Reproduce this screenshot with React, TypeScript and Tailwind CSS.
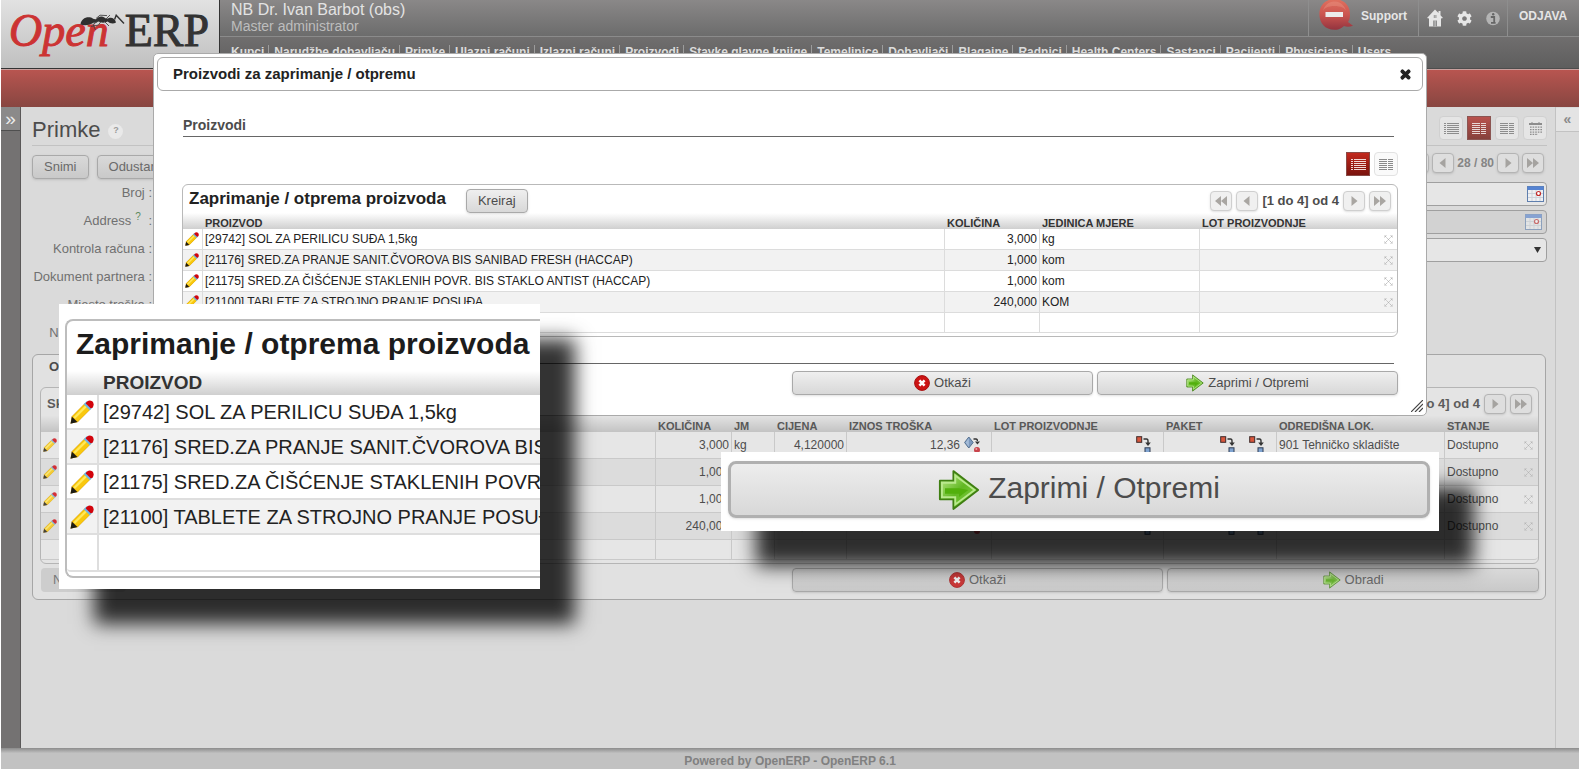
import { FaCog, FaTimes } from "react-icons/fa";
import clsx from "clsx";
import type { ReactNode } from "react";

const navItems = [
  "Kupci",
  "Narudžbe dobavljaču",
  "Primke",
  "Ulazni računi",
  "Izlazni računi",
  "Proizvodi",
  "Stavke glavne knjige",
  "Temeljnice",
  "Dobavljači",
  "Blagajne",
  "Radnici",
  "Health Centers",
  "Sastanci",
  "Pacijenti",
  "Physicians",
  "Users",
];

const products = [
  { name: "[29742] SOL ZA PERILICU SUĐA 1,5kg", qty: "3,000", unit: "kg", price: "4,120000", cost: "12,36" },
  { name: "[21176] SRED.ZA PRANJE SANIT.ČVOROVA BIS SANIBAD FRESH (HACCAP)", qty: "1,000", unit: "kom", price: "33,750000", cost: "33,75" },
  { name: "[21175] SRED.ZA ČIŠĆENJE STAKLENIH POVR. BIS STAKLO ANTIST (HACCAP)", qty: "1,000", unit: "kom", price: "28,500000", cost: "28,50" },
  { name: "[21100] TABLETE ZA STROJNO PRANJE POSUĐA", qty: "240,000", unit: "KOM", price: "0,750000", cost: "180,00" },
];

/* ---------- icons ---------- */

function Pencil({ className }: { className: string }) {
  return (
    <svg className={className} viewBox="0 0 14 14">
      <path d="M0.3 13.7 L1 9.6 L9 1.6 L12.4 5 L4.4 13 Z" fill="#c98a00" />
      <path d="M1.2 9.6 L8.6 2.2 L11.8 5.4 L4.4 12.8 Z" fill="#f9c80e" />
      <path d="M2 10 L9 3 L10 4 L3 11 Z" fill="#ffe85c" />
      <path d="M0.3 13.8 L1.1 9.8 L4.3 12.9 Z" fill="#1c1c14" />
      <path d="M8 2.5 L9.7 0.8 L13.2 4.3 L11.5 6 Z" fill="#6cb6e8" />
      <path d="M9.4 1.4 Q11 -0.6 13 0.8 Q14.6 2.6 13 4.6 L12 4.8 L9.2 2 Z" fill="#d2040c" />
    </svg>
  );
}

function GreenArrow({ className }: { className: string }) {
  return (
    <svg className={className} viewBox="0 0 18 18">
      <defs>
        <linearGradient id="arrowFill" x1="0" y1="0" x2="1" y2="1">
          <stop offset="0" stopColor="#c8f09a" />
          <stop offset="0.5" stopColor="#62b823" />
          <stop offset="1" stopColor="#84d044" />
        </linearGradient>
      </defs>
      <path d="M0.8 5 H6.6 V0.9 L17.2 9 L6.6 17.1 V13 H0.8 Z" fill="url(#arrowFill)" stroke="#3f7f12" strokeWidth="0.8" strokeLinejoin="round" />
      <path d="M1.7 5.9 H7.4 V2.8 L15.7 9 L7.4 15.2 V12.1 H1.7 Z" fill="none" stroke="#b9e98d" strokeWidth="0.8" />
      <path d="M3 8.2 H9 L13 9 L9 12 V10.6 H3 Z" fill="#52b00c" />
    </svg>
  );
}

function CancelIcon({ dim }: { dim?: boolean }) {
  return (
    <svg className={clsx("size-4", dim && "opacity-80")} viewBox="0 0 16 16">
      <circle cx="8" cy="8" r="7.4" fill="#cc1414" stroke="#a80f0f" />
      <path d="M5.4 5.4 L10.6 10.6 M10.6 5.4 L5.4 10.6" stroke="#fff" strokeWidth="2.6" />
    </svg>
  );
}

function SplitIcon() {
  return (
    <svg className="h-[18px] w-4" viewBox="0 0 16 18">
      <rect x="0.7" y="0.7" width="5" height="5.6" fill="#d9573c" stroke="#3c2a2a" />
      <path d="M7.5 3 H10.5 Q12 3 12 5 V8" fill="none" stroke="#333" strokeWidth="1.4" />
      <path d="M9.2 6.6 H14.8 L12 10 Z" fill="#333" />
      <rect x="9" y="11.8" width="5" height="5.5" fill="#7fa3d0" stroke="#2c3b52" />
    </svg>
  );
}

function ConsumeIcon() {
  return (
    <svg className="h-[18px] w-4" viewBox="0 0 16 18">
      <path d="M4.8 1 L9.2 6.5 L4.8 12 L0.6 6.5 Z" fill="#7b98bd" stroke="#54708f" />
      <path d="M4.8 2 V11 L1.5 6.5 Z" fill="#a5bcd8" />
      <path d="M9.5 3 H12 Q13.4 3 13.4 5" fill="none" stroke="#333" strokeWidth="1.4" />
      <path d="M11 5.4 H16 L13.4 8.6 Z" fill="#333" />
      <circle cx="13" cy="14" r="3" fill="#c9444c" />
      <circle cx="12.3" cy="13" r="1" fill="#eea3a6" />
    </svg>
  );
}

function RowDelete() {
  return (
    <button aria-label="Ukloni" className="flex items-center justify-center text-[#b5b5b5]">
      <svg className="size-[9px]" viewBox="0 0 9 9" stroke="currentColor" fill="none">
        <path d="M1 1 L8 8 M8 1 L1 8" strokeDasharray="1.6 0.6" />
        <path d="M0.5 3 V0.5 H3 M6 0.5 H8.5 V3 M8.5 6 V8.5 H6 M3 8.5 H0.5 V6" strokeWidth="0.4" />
      </svg>
    </button>
  );
}

function ListGlyph() {
  return (
    <svg className="h-[11px] w-[15px]" viewBox="0 0 15 11" stroke="currentColor" shapeRendering="crispEdges">
      <path d="M0 0.5 H2 M0 2.5 H2 M0 4.5 H2 M0 6.5 H2 M0 8.5 H2 M0 10.5 H2" />
      <path d="M3 0.5 H15 M3 2.5 H15 M3 4.5 H15 M3 6.5 H15 M3 8.5 H15 M3 10.5 H15" />
    </svg>
  );
}

function FormGlyph() {
  return (
    <svg className="h-[11px] w-[14px]" viewBox="0 0 14 11" stroke="currentColor" shapeRendering="crispEdges">
      <path d="M0 0.5 H8 M0 2.5 H8 M0 4.5 H8 M0 6.5 H8 M0 8.5 H8 M0 10.5 H8" />
      <path d="M9 0.5 H14 M9 2.5 H14 M9 4.5 H14 M9 6.5 H14 M9 8.5 H14 M9 10.5 H14" />
    </svg>
  );
}

function CalendarGlyph() {
  return (
    <svg className="h-[13px] w-[13px]" viewBox="0 0 13 13" stroke="currentColor" fill="none">
      <path d="M0 2 H13" strokeWidth="2" />
      <path d="M3 0 V2 M10 0 V2" />
      <path d="M1 5.2 H13 M1 7.7 H13 M1 10.2 H13 M1 12.4 H9" strokeWidth="1.3" strokeDasharray="1.6 1" />
    </svg>
  );
}

function DateIcon({ faded }: { faded?: boolean }) {
  return (
    <svg className={clsx("h-4 w-[17px]", faded && "opacity-60")} viewBox="0 0 17 16">
      <rect x="0.5" y="0.5" width="16" height="15" fill="#eef0f3" stroke="#5f7fae" />
      <rect x="0.5" y="0.5" width="16" height="3.5" fill="#5583d2" />
      <path d="M1 7.5 H16 M1 11.5 H16 M5 4 V15 M9 4 V15 M13 4 V15" stroke="#cdd2da" />
      <circle cx="11.5" cy="7.5" r="2" fill="#fff" stroke="#c22b2b" strokeWidth="1.2" />
    </svg>
  );
}

function SupportIcon() {
  return (
    <svg className="h-[30px] w-[34px]" viewBox="0 0 34 30">
      <defs>
        <linearGradient id="bubble" x1="0" y1="0" x2="0" y2="1">
          <stop offset="0" stopColor="#e0715f" />
          <stop offset="0.5" stopColor="#cb5550" />
          <stop offset="1" stopColor="#94343f" />
        </linearGradient>
      </defs>
      <path
        d="M15.5 -1 C24 -1 31 5 31 14 C31 18 30.4 20 29 22 L34 25.8 C31 27 27 27 25 26 C22 29 19 29.8 15.5 29.8 C6 29.8 0.4 23 0.4 14 C0.4 5 7 -1 15.5 -1 Z"
        fill="url(#bubble)"
      />
      <path d="M4 12 C4 4 27 4 27 12 C27 9 24 1.5 15.5 1.5 C7 1.5 4 9 4 12 Z" fill="#eda090" opacity="0.35" />
      <rect x="6.5" y="12" width="17.5" height="5" fill="#ececec" />
    </svg>
  );
}

function HomeIcon() {
  return (
    <svg className="h-[18px] w-4" viewBox="0 0 16 18">
      <path d="M8 0.5 L0 9 L2 9.6 V17.5 H14 V9.6 L16 9 L13.5 6.2 V2 H11.5 V4 Z" fill="#e6e6e6" />
      <path d="M6.2 17.5 V11.5 H10 V17.5 Z M6.8 6 H9.4 V9 H6.8 Z" fill="#8b8b8b" />
      <path d="M8.1 11.5 V17.5 M8.1 6 V9" stroke="#e6e6e6" strokeWidth="0.7" />
    </svg>
  );
}

function InfoIcon() {
  return (
    <svg className="h-[15px] w-[14px]" viewBox="0 0 14 15">
      <circle cx="7" cy="7.5" r="6.8" fill="#b4b4b4" />
      <path d="M4.8 6 H8.2 V11.6 M5 11.8 H9.6" stroke="#666" strokeWidth="1.8" fill="none" />
      <circle cx="7.2" cy="3.2" r="1.2" fill="#666" />
    </svg>
  );
}

function Ant() {
  return (
    <svg className="absolute top-[14px] left-[79px] h-[17px] w-[46px]" viewBox="0 0 46 17">
      <path
        d="M0.5 10.6 C1 5 6 2.4 11 3.6 C13 4.6 14.4 6 16.5 5 C18 2.4 22 1.6 24.4 3.6 C25.5 5 27.5 4.8 29 4 C31.5 3 35.4 4.4 36 8.6 C33.4 10.2 29.5 9.6 27.8 7.6 C25 9 21 9 18.5 7.6 C17 8.6 15 9 13.4 8.8 C10 11.6 4 11.6 0.5 10.6 Z"
        fill="#2f2f2f"
      />
      <path
        d="M18 7 L13 10.5 L15.5 16 M21 7.5 L18.5 11 L11 12.5 M24 7 L29 12 M16 4.5 L20 1.2 L27 1.6 M26 5 L30 1"
        fill="none"
        stroke="#444"
        strokeWidth="0.9"
      />
      <path d="M34.6 5.5 L36.2 1.2 L44 9.5" fill="none" stroke="#333" strokeWidth="1.4" />
    </svg>
  );
}

/* ---------- small building blocks ---------- */

function PagerButton({ dir, dim }: { dir: "first" | "prev" | "next" | "last"; dim?: boolean }) {
  const back = dir === "first" || dir === "prev";
  const double = dir === "first" || dir === "last";
  return (
    <button
      aria-label={dir}
      className={clsx(
        "flex h-5 w-[22px] items-center justify-center rounded border shadow-sm",
        dim ? "border-[#b4b4b4] bg-[#dedede] text-[#a5a3a0]" : "border-[#cfcfcf] bg-[#f0f0f0] text-[#a9a6a2]"
      )}
    >
      <svg className={clsx("h-[10px] w-3", back && "rotate-180")} viewBox="0 0 12 10" fill="currentColor">
        {double ? <path d="M0 0 L6 5 L0 10 Z M6 0 L12 5 L6 10 Z" /> : <path d="M3.5 0 L9.5 5 L3.5 10 Z" />}
      </svg>
    </button>
  );
}

function ViewButton({ active, dim, label, children }: { active?: boolean; dim?: boolean; label: string; children: ReactNode }) {
  return (
    <button
      aria-label={label}
      className={clsx(
        "flex size-6 items-center justify-center border",
        active && dim && "border-[#8b5552] bg-linear-to-b from-[#b9524d] to-[#86413c] text-[#e8d6d5]",
        active && !dim && "border-[#8a4a46] bg-linear-to-b from-[#c3291e] to-[#7a130d] text-[#f3d9d7]",
        !active && dim && "rounded-sm border-[#d0d0d0] bg-[#e5e5e5] text-[#8d8d8d]",
        !active && !dim && "rounded-sm border-[#e2e2e2] bg-[#fafafa] text-[#8a8a8a]"
      )}
    >
      {children}
    </button>
  );
}

function WideButton({ dim, className, children }: { dim?: boolean; className?: string; children: ReactNode }) {
  return (
    <button
      className={clsx(
        "flex h-6 items-center justify-center gap-1 rounded border border-[#a9a9a9] bg-linear-to-b text-[13px] shadow-sm",
        dim ? "from-[#d9d9d9] to-[#c9c9c9] text-[#6a6a6a]" : "from-[#efefef] to-[#d8d8d8] text-[#4c4c4c]",
        className
      )}
    >
      {children}
    </button>
  );
}

/* ---------- header ---------- */

function Header() {
  return (
    <header>
      <div className="flex h-[69px]">
        <div className="relative w-[219px] shrink-0 border-r border-b border-[#333] bg-linear-to-b from-[#e2e2e2] to-[#c0c0c0]">
          <a href="#" className="absolute top-[5px] left-2 font-['Liberation_Serif',serif] text-[46px] leading-[52px] whitespace-nowrap">
            <span className="text-[#cc3333] italic [-webkit-text-stroke:1px_#cc3333]">Open</span>
            <span className="ml-4 text-[#333] [-webkit-text-stroke:1px_#333]">ERP</span>
          </a>
          <Ant />
        </div>
        <div className="flex min-w-0 flex-1 flex-col border-b border-[#4d4d4d]">
          <div className="flex h-[37px] justify-between border-b border-[#8b8b8b] bg-linear-to-b from-[#8a8888] to-[#6c6c6c]">
            <div className="pl-[11px] whitespace-nowrap text-[#e3e3e3]">
              <div className="text-[16px] leading-5">NB Dr. Ivan Barbot (obs)</div>
              <div className="text-[14px] leading-3 text-[#bdbdbd]">Master administrator</div>
            </div>
            <div className="flex text-[12px] font-bold text-[#e6e6e6]">
              <a href="#" className="flex w-[110px] gap-2 border-l border-[#8e8e8e] pl-[10px]">
                <SupportIcon />
                <span className="leading-8">Support</span>
              </a>
              <div className="flex w-[89px] items-center gap-[14px] border-l border-[#8e8e8e] pl-2">
                <a href="#" aria-label="Home"><HomeIcon /></a>
                <a href="#" aria-label="Postavke"><FaCog className="size-[15px]" /></a>
                <a href="#" aria-label="Info"><InfoIcon /></a>
              </div>
              <a href="#" className="w-[72px] border-l border-[#8e8e8e] pl-[11px] leading-8">ODJAVA</a>
            </div>
          </div>
          <nav className="flex flex-1 items-start bg-linear-to-b from-[#706e6e] to-[#5e5e5e] pt-2 pl-[6px]">
            {navItems.map((item, i) => (
              <a
                key={item}
                href="#"
                className={clsx(
                  "pr-1 pl-[5px] text-[12px] leading-[14px] font-bold whitespace-nowrap text-[#dcdcdc]",
                  i > 0 && "border-l border-[#9c9c9c]"
                )}
              >
                {item}
              </a>
            ))}
          </nav>
        </div>
      </div>
      <div className="h-[38px] border-t border-[#c9a09e] bg-linear-to-b from-[#b85550] to-[#884641]" />
    </header>
  );
}

/* ---------- page behind the dialog ---------- */

function FieldRow({ label, hint, id, children }: { label: string; hint?: boolean; id: string; children: ReactNode }) {
  return (
    <div className="flex h-7 items-start gap-1">
      <label htmlFor={id} className="w-[120px] shrink-0 text-right text-[13px] leading-[22px] whitespace-nowrap text-[#707070]">
        {label}
        {hint && <sup className="px-1 text-[10px] text-[#5c8a5c]">?</sup>} :
      </label>
      {children}
    </div>
  );
}

function ReceiptForm() {
  return (
    <div className="pt-[3px]">
      <FieldRow label="Broj" id="broj">
        <div className="flex h-6 flex-1 items-center rounded border border-[#9f9f9f] bg-[#e6e6e6] pr-[2px]">
          <input id="broj" className="min-w-0 flex-1 bg-transparent px-1 text-[12px] outline-none" />
          <DateIcon />
        </div>
      </FieldRow>
      <FieldRow label="Address" hint id="address">
        <div className="flex h-6 flex-1 items-center rounded border border-[#9f9f9f] bg-[#d2d2d2] pr-1">
          <input id="address" disabled className="min-w-0 flex-1 bg-transparent px-1 text-[12px] outline-none" />
          <DateIcon faded />
        </div>
      </FieldRow>
      <FieldRow label="Kontrola računa" id="kontrola">
        <div className="relative flex h-6 flex-1">
          <select id="kontrola" className="w-full appearance-none rounded border border-[#9f9f9f] bg-[#e6e6e6] px-1 text-[12px]" />
          <svg className="pointer-events-none absolute top-[9px] right-[6px] h-[6px] w-[7px]" viewBox="0 0 7 6">
            <path d="M0 0 H7 L3.5 6 Z" fill="#333" />
          </svg>
        </div>
      </FieldRow>
      <FieldRow label="Dokument partnera" id="dokument">
        <input id="dokument" className="h-6 w-1/2 rounded border border-[#9f9f9f] bg-[#e6e6e6]" />
      </FieldRow>
      <FieldRow label="Mjesto troška" id="mjesto">
        <input id="mjesto" className="h-6 w-1/2 rounded border border-[#9f9f9f] bg-[#e6e6e6]" />
      </FieldRow>
      <FieldRow label="Nadređeni nalog" id="nalog">
        <input id="nalog" className="h-6 w-1/2 rounded border border-[#9f9f9f] bg-[#e6e6e6]" />
      </FieldRow>
    </div>
  );
}

const moveCell = "border-r border-b border-[#c9c9c9] px-[2px]";

function MovesTable() {
  return (
    <table className="w-full table-fixed border-separate border-spacing-0 text-[12px] text-[#4d4d4d]">
      <colgroup>
        <col className="w-5" />
        <col />
        <col className="w-[76px]" />
        <col className="w-[43px]" />
        <col className="w-[72px]" />
        <col className="w-[145px]" />
        <col className="w-[172px]" />
        <col className="w-[113px]" />
        <col className="w-[168px]" />
        <col className="w-[75px]" />
        <col className="w-[18px]" />
      </colgroup>
      <thead>
        <tr className="h-4 bg-linear-to-b from-[#e3e3e3] to-[#c3c3c3] text-left align-bottom text-[11px] leading-3 whitespace-nowrap text-[#585858]">
          <th />
          <th className="px-[2px]">PROIZVOD</th>
          <th className="px-[2px]">KOLIČINA</th>
          <th className="px-[2px]">JM</th>
          <th className="px-[2px]">CIJENA</th>
          <th className="px-[2px]">IZNOS TROŠKA</th>
          <th className="px-[2px]">LOT PROIZVODNJE</th>
          <th className="px-[2px]">PAKET</th>
          <th className="px-[2px]">ODREDIŠNA LOK.</th>
          <th className="px-[2px]">STANJE</th>
          <th />
        </tr>
      </thead>
      <tbody>
        {products.map((p, i) => (
          <tr key={p.name} className={clsx("h-[27px] whitespace-nowrap", i % 2 === 0 ? "bg-[#e6e6e6]" : "bg-[#dcdcdc]")}>
            <td className={moveCell}><Pencil className="size-[14px] opacity-80" /></td>
            <td className={clsx(moveCell, "overflow-hidden")}>{p.name}</td>
            <td className={clsx(moveCell, "text-right")}>{p.qty}</td>
            <td className={moveCell}>{p.unit}</td>
            <td className={clsx(moveCell, "text-right")}>{p.price}</td>
            <td className="border-r border-b border-[#c9c9c9] pr-[11px]">
              <div className="flex items-center justify-end gap-1">
                {p.cost}
                <ConsumeIcon />
              </div>
            </td>
            <td className="border-r border-b border-[#c9c9c9] pr-[11px]">
              <div className="flex justify-end"><SplitIcon /></div>
            </td>
            <td className="border-r border-b border-[#c9c9c9] pr-[11px]">
              <div className="flex justify-end gap-[13px]"><SplitIcon /><SplitIcon /></div>
            </td>
            <td className={moveCell}>901 Tehničko skladište</td>
            <td className="border-b border-[#c9c9c9] px-[2px]">Dostupno</td>
            <td className="border-b border-[#c9c9c9] px-1"><RowDelete /></td>
          </tr>
        ))}
        <tr className="h-5 bg-[#e6e6e6]">
          {Array.from({ length: 9 }, (_, i) => (
            <td key={i} className={moveCell} />
          ))}
          <td className="border-b border-[#c9c9c9]" />
          <td className="rounded-br border-b border-[#c9c9c9]" />
        </tr>
      </tbody>
    </table>
  );
}

function ReceiptPage() {
  return (
    <main className="min-w-0 flex-1 pr-2 pl-[11px]">
      <div className="flex h-[39px] items-center justify-between border-b border-[#c2c2c2] pt-1">
        <h1 className="flex items-center gap-2 pt-[2px] text-[22px] text-[#4c4c4c]">
          Primke
          <span className="mt-1 flex size-[15px] items-center justify-center rounded-full bg-[#e9e9e9] text-[9px] font-bold text-[#9a9a9a]">?</span>
        </h1>
        <div className="flex gap-1">
          <ViewButton dim label="Lista"><ListGlyph /></ViewButton>
          <ViewButton dim active label="Obrazac"><FormGlyph /></ViewButton>
          <ViewButton dim label="Stranica"><FormGlyph /></ViewButton>
          <ViewButton dim label="Kalendar"><CalendarGlyph /></ViewButton>
        </div>
      </div>
      <div className="flex items-start justify-between pt-[7px]">
        <div className="flex gap-2 pt-[2px]">
          <WideButton dim className="px-[11px]">Snimi</WideButton>
          <WideButton dim className="px-[11px]">Odustani</WideButton>
        </div>
        <div className="flex items-center gap-[3px] pr-[3px] text-[12px] font-bold text-[#858585]">
          <PagerButton dim dir="first" />
          <PagerButton dim dir="prev" />
          <span>28 / 80</span>
          <PagerButton dim dir="next" />
          <PagerButton dim dir="last" />
        </div>
      </div>
      <ReceiptForm />
      <section className="mt-1 mr-px rounded-md border border-[#a6a6a6] bg-[#e1e1e1] pr-[6px] pb-[7px] pl-[7px]">
        <h2 className="h-8 pl-[9px] text-[13px] leading-6 font-bold text-[#4c4c4c]">Osnovno</h2>
        <div className="rounded-md border border-[#b5b5b5] bg-[#e4e4e4] pb-[3px]">
          <div className="flex h-7 items-center justify-between pr-[6px] pl-[6px] text-[13px] font-bold text-[#5c5c5c]">
            <span className="pt-1">Skladišni prijenosi</span>
            <div className="flex items-center gap-1 pt-1">
              <PagerButton dim dir="first" />
              <PagerButton dim dir="prev" />
              <span>[1 do 4] od 4</span>
              <PagerButton dim dir="next" />
              <PagerButton dim dir="last" />
            </div>
          </div>
          <MovesTable />
        </div>
        <div className="mt-1 grid grid-cols-4 gap-1">
          <div className="col-span-2 flex pl-px">
            <button disabled className="h-6 rounded bg-[#cdcdcd] px-3 text-[13px] text-[#777]">Novi paket</button>
          </div>
          <WideButton dim><CancelIcon dim />Otkaži</WideButton>
          <WideButton dim><GreenArrow className="size-[18px] opacity-80" />Obradi</WideButton>
        </div>
      </section>
    </main>
  );
}

/* ---------- dialog ---------- */

const lineCell = "border-r border-b border-[#dcdcdc] px-[2px]";

function ReceiveDialog() {
  return (
    <div role="dialog" className="absolute inset-x-[152px] top-[53px] rounded-[5px] border border-[#aaa] bg-white p-[3px]">
      <div className="flex h-[34px] items-center justify-between rounded-md border border-[#aaa] pr-[10px] pl-[15px]">
        <h2 className="text-[15px] font-bold text-[#222]">Proizvodi za zaprimanje / otpremu</h2>
        <button aria-label="Zatvori" className="text-[#222]">
          <FaTimes className="size-[13px]" stroke="currentColor" strokeWidth="50" />
        </button>
      </div>
      <div className="px-[25px] pt-6 pb-[17px]">
        <h3 className="mr-1 ml-px border-b border-[#666] text-[14px] leading-[21px] font-bold text-[#4c4c4c]">Proizvodi</h3>
        <div className="mt-[15px] flex justify-end gap-1">
          <ViewButton active label="Lista"><ListGlyph /></ViewButton>
          <ViewButton label="Obrazac"><FormGlyph /></ViewButton>
        </div>
        <div className="mt-2 rounded-md border border-[#b9b9b9] pb-[3px]">
          <div className="flex h-7 items-center justify-between px-[6px]">
            <div className="flex items-center gap-5">
              <h4 className="text-[17px] font-bold text-[#222]">Zaprimanje / otprema proizvoda</h4>
              <WideButton className="mt-1 px-[11px]">Kreiraj</WideButton>
            </div>
            <div className="flex items-center gap-1 pt-1 text-[13px] font-bold text-[#4c4c4c]">
              <PagerButton dir="first" />
              <PagerButton dir="prev" />
              <span>[1 do 4] od 4</span>
              <PagerButton dir="next" />
              <PagerButton dir="last" />
            </div>
          </div>
          <table className="w-full table-fixed border-separate border-spacing-0 text-[12px] text-[#222]">
            <colgroup>
              <col className="w-5" />
              <col />
              <col className="w-[95px]" />
              <col className="w-[160px]" />
              <col className="w-[180px]" />
              <col className="w-[17px]" />
            </colgroup>
            <thead>
              <tr className="h-4 bg-linear-to-b from-white to-[#cfcfcf] text-left align-bottom text-[11px] leading-3 whitespace-nowrap text-[#333]">
                <th />
                <th className="px-[2px]">PROIZVOD</th>
                <th className="px-[2px]">KOLIČINA</th>
                <th className="px-[2px]">JEDINICA MJERE</th>
                <th className="px-[2px]">LOT PROIZVODNJE</th>
                <th />
              </tr>
            </thead>
            <tbody>
              {products.map((p, i) => (
                <tr key={p.name} className={clsx("h-[21px] leading-4 whitespace-nowrap", i % 2 === 1 && "bg-[#f2f2f2]")}>
                  <td className={lineCell}><Pencil className="size-[14px]" /></td>
                  <td className={lineCell}>{p.name}</td>
                  <td className={clsx(lineCell, "text-right")}>{p.qty}</td>
                  <td className={lineCell}>{p.unit}</td>
                  <td className="border-b border-[#dcdcdc]" />
                  <td className="border-b border-[#dcdcdc] px-1"><RowDelete /></td>
                </tr>
              ))}
              <tr className="h-5">
                <td className={lineCell} />
                <td className={lineCell} />
                <td className={lineCell} />
                <td className={lineCell} />
                <td className="border-b border-[#dcdcdc]" />
                <td className="rounded-br border-b border-[#dcdcdc]" />
              </tr>
            </tbody>
          </table>
        </div>
        <hr className="mt-[26px] mr-1 ml-px border-[#666]" />
        <div className="mt-[7px] grid grid-cols-4 gap-1">
          <WideButton className="col-start-3"><CancelIcon />Otkaži</WideButton>
          <WideButton><GreenArrow className="size-[18px]" />Zaprimi / Otpremi</WideButton>
        </div>
      </div>
      <svg className="absolute right-[3px] bottom-[3px] size-3" viewBox="0 0 12 12" stroke="#444">
        <path d="M0 12 L12 0 M4 12 L12 4 M8 12 L12 8" strokeWidth="1.2" />
      </svg>
    </div>
  );
}

/* ---------- magnified callouts ---------- */

function ListCallout() {
  return (
    <div className="absolute top-[304px] left-[58px] w-[481px] bg-white pt-[15px] pb-[11px] pl-[6px] shadow-[35px_35px_18px_rgba(0,0,0,0.8)]">
      <div className="overflow-hidden rounded-l-lg border-y-2 border-l-2 border-[#bdbdbd] pb-1">
        <h4 className="h-[50px] pl-[9px] text-[30px] leading-[46px] font-bold whitespace-nowrap text-[#1c1c1c]">
          Zaprimanje / otprema proizvoda
        </h4>
        <table className="w-full table-fixed border-separate border-spacing-0 text-[20px] text-[#222]">
          <colgroup>
            <col className="w-[32px]" />
            <col />
          </colgroup>
          <thead>
            <tr className="h-6 bg-linear-to-b from-white to-[#cfcfcf] text-left text-[19px] leading-6 text-[#333]">
              <th />
              <th className="pl-1">PROIZVOD</th>
            </tr>
          </thead>
          <tbody>
            {products.map((p, i) => (
              <tr key={p.name} className={clsx("h-[35px] whitespace-nowrap", i % 2 === 1 && "bg-[#f2f2f2]")}>
                <td className="border-r-2 border-b-2 border-[#dedede] pl-[3px]"><Pencil className="size-6" /></td>
                <td className="overflow-hidden border-b-2 border-[#dedede] pl-1">{p.name}</td>
              </tr>
            ))}
            <tr className="h-[37px]">
              <td className="rounded-bl border-r-2 border-b-2 border-[#dedede]" />
              <td className="border-b-2 border-[#dedede]" />
            </tr>
          </tbody>
        </table>
      </div>
    </div>
  );
}

function ButtonCallout() {
  return (
    <div className="absolute top-[452px] left-[720px] w-[718px] bg-white pt-[9px] pr-[9px] pb-[13px] pl-[7px] shadow-[35px_35px_18px_rgba(0,0,0,0.8)]">
      <button className="flex h-[57px] w-full items-center justify-center gap-2 rounded-lg border-[3px] border-[#b0b0b0] bg-linear-to-b from-[#ededed] to-[#d8d8d8] text-[30px] text-[#4c4c4c] shadow-sm">
        <GreenArrow className="size-[42px]" />
        <span className="pb-1">Zaprimi / Otpremi</span>
      </button>
    </div>
  );
}

export default function App() {
  return (
    <div className="relative flex min-h-screen flex-col overflow-hidden border-x border-white bg-[#dadada] font-['Liberation_Sans',Arial,sans-serif]">
      <Header />
      <div className="flex flex-1">
        <aside className="w-5 shrink-0 border-r border-[#5a5858] bg-[#747272]">
          <button className="h-6 w-full border-b border-[#4f4f4f] bg-[#8b8a8a] text-[19px] leading-[18px] text-[#ececec]">»</button>
        </aside>
        <ReceiptPage />
        <aside className="w-6 shrink-0 border-l border-[#c2c2c2]">
          <button className="h-6 w-full border-b border-[#c2c2c2] bg-[#e4e4e4] text-[14px] leading-5 font-bold text-[#8a8a8a]">«</button>
        </aside>
      </div>
      <footer className="h-[21px] bg-linear-to-b from-[#8c8c8c] to-[#c2c2c2] to-25% text-center text-[12px] leading-[26px] font-bold text-[#808080]">
        Powered by OpenERP - OpenERP 6.1
      </footer>
      <ReceiveDialog />
      <ListCallout />
      <ButtonCallout />
    </div>
  );
}
